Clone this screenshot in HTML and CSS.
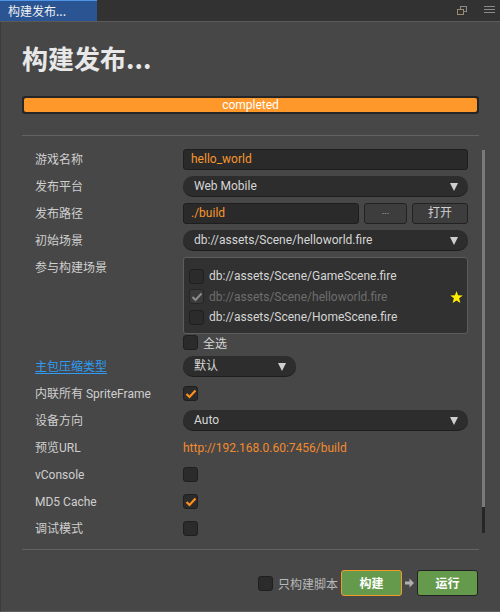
FILE: index.html
```html
<!DOCTYPE html>
<html>
<head>
<meta charset="utf-8">
<link rel="stylesheet" href="styles.css">
</head>
<body>
<div class="tabbar">
  <div class="tab">构建发布...</div>
  <div class="tabicons">
    <svg class="ico-restore" width="10" height="9" viewBox="0 0 10 9"><rect x="3.5" y="0.5" width="6" height="5" fill="none" stroke="#8a8a8a"/><rect x="0.5" y="3.5" width="6" height="5" fill="#333" stroke="#9a8a70"/></svg>
    <svg class="ico-menu" width="11" height="8" viewBox="0 0 11 8"><rect x="0" y="0" width="11" height="1" fill="#8a8a8a"/><rect x="0" y="3" width="11" height="1" fill="#8a8a8a"/><rect x="0" y="6" width="11" height="1" fill="#8a8a8a"/></svg>
  </div>
</div>
<div class="panel">
  <h1 class="title">构建发布...</h1>
  <div class="progress"><div class="progress-fill">completed</div></div>
  <div class="sep"></div>
  <div class="scrollwrap">
    <div class="form">
      <div class="row"><div class="label">游戏名称</div><div class="input orange">hello_world</div></div>
      <div class="row"><div class="label">发布平台</div><div class="select">Web Mobile<span class="arrow"></span></div></div>
      <div class="row"><div class="label">发布路径</div><div class="input orange grow">./build</div><div class="btn btn-dots">...</div><div class="btn btn-open">打开</div></div>
      <div class="row"><div class="label">初始场景</div><div class="select">db://assets/Scene/helloworld.fire<span class="arrow"></span></div></div>
      <div class="row row-top"><div class="label label-top">参与构建场景</div>
        <div class="col">
          <div class="scenelist">
            <div class="scene"><span class="cb"></span><span>db://assets/Scene/GameScene.fire</span></div>
            <div class="scene disabled"><span class="cb cb-gray"><svg width="12" height="10" viewBox="0 0 12 10"><polyline points="1.5,5 4.5,8 10.5,1.5" fill="none" stroke="#8c8c8c" stroke-width="2"/></svg></span><span>db://assets/Scene/helloworld.fire</span>
              <svg class="star" width="13" height="12" viewBox="0 0 24 23"><polygon points="12,0 15,8 24,8.5 17,14 19.5,23 12,18 4.5,23 7,14 0,8.5 9,8" fill="#ffee00"/></svg></div>
            <div class="scene"><span class="cb"></span><span>db://assets/Scene/HomeScene.fire</span></div>
          </div>
          <div class="selectall"><span class="cb"></span><span>全选</span></div>
        </div>
      </div>
      <div class="row"><div class="label link">主包压缩类型</div><div class="select small">默认<span class="arrow"></span></div></div>
      <div class="row"><div class="label">内联所有 SpriteFrame</div><span class="cb cb-on"><svg width="12" height="10" viewBox="0 0 12 10"><polyline points="1.5,5 4.5,8 10.5,1.5" fill="none" stroke="#ff8f1f" stroke-width="2.2"/></svg></span></div>
      <div class="row"><div class="label">设备方向</div><div class="select">Auto<span class="arrow"></span></div></div>
      <div class="row"><div class="label">预览URL</div><div class="url">http://192.168.0.60:7456/build</div></div>
      <div class="row"><div class="label">vConsole</div><span class="cb"></span></div>
      <div class="row"><div class="label">MD5 Cache</div><span class="cb cb-on"><svg width="12" height="10" viewBox="0 0 12 10"><polyline points="1.5,5 4.5,8 10.5,1.5" fill="none" stroke="#ff8f1f" stroke-width="2.2"/></svg></span></div>
      <div class="row"><div class="label">调试模式</div><span class="cb"></span></div>
    </div>
    <div class="scrollbar"><div class="thumb"></div></div>
  </div>
  <div class="sep"></div>
  <div class="footer">
    <span class="cb"></span><span class="footlabel">只构建脚本</span>
    <div class="gbtn gbtn-active">构建</div>
    <svg class="arrowicon" width="9" height="10" viewBox="0 0 9 10"><path d="M0 3.5 H4.5 V0.5 L9 5 L4.5 9.5 V6.5 H0 Z" fill="#b0b0b0"/></svg>
    <div class="gbtn">运行</div>
  </div>
</div>
</body>
</html>
```
FILE: styles.css
```css
* { box-sizing: border-box; }
html, body { margin: 0; padding: 0; }
body {
  width: 500px; height: 612px; overflow: hidden;
  background: #474747;
  font-family: Roboto, "Noto Sans CJK SC", sans-serif;
  font-size: 12px; color: #cfcfcf;
}
.tabbar {
  height: 22px; background: #323232; border-bottom: 1px solid #5a5a5a;
  display: flex; justify-content: space-between; align-items: stretch;
}
.tab {
  width: 97px; background: #2b5493; border-top: 1px solid #4d95e8;
  color: #f0f0f0; font-size: 12px; line-height: 19px; padding-left: 8px;
  font-family: "Noto Sans CJK SC", sans-serif;
}
.tabicons { display: flex; align-items: center; gap: 17px; padding-right: 5px; padding-bottom: 1px; }
.panel {
  height: 590px; padding: 0 21px;
  border-left: 1px solid #3c3c3c; border-bottom: 1px solid #5e5e5e;
}
.title {
  margin: 0; padding-top: 21px; height: 74px;
  font-family: "Noto Sans CJK SC", sans-serif; font-weight: 700;
  font-size: 26px; line-height: 30px; color: #e8e8e8;
}
.progress {
  height: 18px; background: #262626; border-radius: 3px; padding: 2px;
}
.progress-fill {
  height: 14px; background: #ff982a; border-radius: 2px;
  color: #fff; text-align: center; font-size: 12px; line-height: 14px;
}
.sep { height: 1px; background: #626262; margin-top: 21px; }
.scrollwrap { display: flex; height: 392px; }
.form { flex: 1; padding: 13px 11px 0 13px; }
.scrollbar {
  flex: none; align-self: flex-start;
  width: 3px; margin-left: 3px; margin-right: -6px; margin-top: 14px;
  height: 383px; background: #262626;
}
.thumb { height: 357px; background: #7a7a7a; }
.row { display: flex; align-items: center; min-height: 21px; margin-bottom: 6px; }
.row-top { align-items: flex-start; }
.label { width: 148px; flex: none; color: #cfcfcf; line-height: 16px; white-space: nowrap; }
.label-top { padding-top: 3px; }
.link { color: #2e9cf4; text-decoration: underline; text-underline-offset: 2px; }
.input {
  flex: 1; height: 21px; background: #2a2a2a; border: 1px solid #1e1e1e; border-radius: 3px;
  padding-left: 7px; line-height: 19px;
}
.orange { color: #f8962e; }
.grow { flex: 1; }
.btn {
  height: 21px; background: #3d3d3d; border: 1px solid #222; border-radius: 3px;
  color: #cfcfcf; text-align: center; line-height: 19px;
}
.btn-dots { width: 43px; margin-left: 5px; font-size: 9px; line-height: 15px; }
.btn-open { width: 56px; margin-left: 5px; }
.select {
  flex: 1; height: 21px; background: #2d2d2d; border-radius: 10px;
  border-bottom: 1px solid #1e1e1e;
  padding-left: 11px; line-height: 21px; color: #d6d6d6; position: relative;
}
.select.small { flex: none; width: 113px; }
.arrow {
  position: absolute; right: 10px; top: 7px;
  width: 0; height: 0; border-left: 4.5px solid transparent; border-right: 4.5px solid transparent;
  border-top: 8px solid #cfcfcf;
}
.col { flex: 1; display: flex; flex-direction: column; }
.scenelist {
  height: 77px; background: #313131; border: 1px solid #5d5d5d; border-radius: 3px;
  padding: 8px 6px 0 5px;
}
.scene { display: flex; align-items: center; height: 20.5px; position: relative; color: #d6d6d6; }
.scene .cb { margin-right: 5px; }
.disabled { color: #6e6e6e; }
.star { position: absolute; right: -2px; top: 4px; }
.cb {
  display: inline-flex; align-items: center; justify-content: center; flex: none;
  width: 15px; height: 15px; background: #2b2b2b; border: 1px solid #1f1f1f; border-radius: 3px;
}
.cb-gray { background: #3a3a3a; border-color: #262626; }
.cb-on { background: #2b2b2b; }
.selectall { display: flex; align-items: center; margin-top: 1px; height: 15px; color: #d6d6d6; }
.selectall .cb { margin-right: 5px; }
.url { color: #f28a2e; }
.footer {
  display: flex; align-items: center; justify-content: flex-end;
  padding-top: 20px; padding-right: 1px;
}
.footlabel { color: #b8b8b8; margin-left: 5px; margin-right: 3px; }
.gbtn {
  width: 61px; height: 26px; background: #659a4d; border: 1px solid #222; border-radius: 3px;
  color: #fff; font-weight: 700; text-align: center; line-height: 24px;
  font-family: "Noto Sans CJK SC", sans-serif; font-size: 12px;
}
.gbtn-active { border-color: #f09a2a; }
.arrowicon { margin: 0 3px; }
```
